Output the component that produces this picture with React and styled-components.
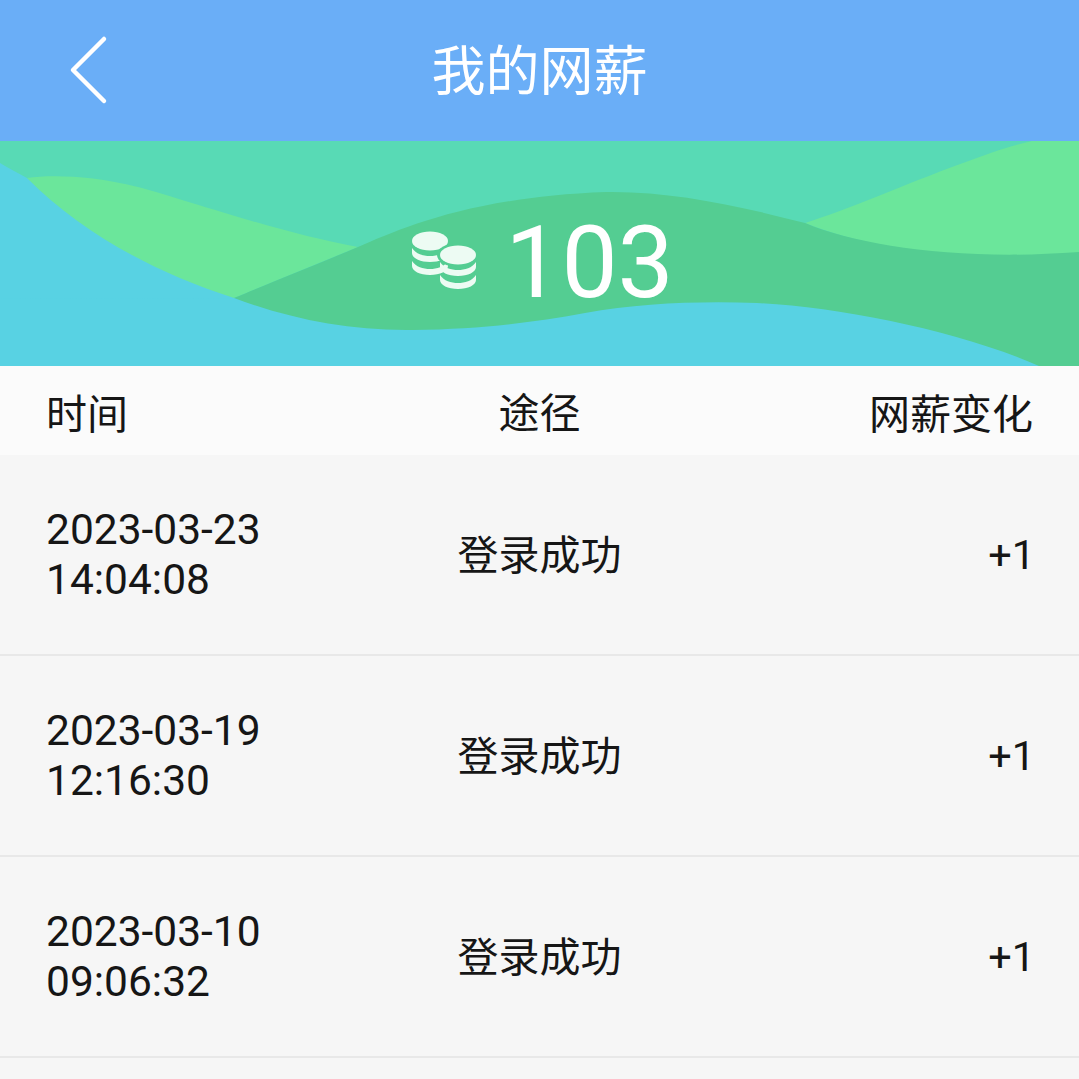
import React from 'react';
import styled, { createGlobalStyle } from 'styled-components';

const Global = createGlobalStyle`
  html, body { margin: 0; padding: 0; background: #f6f6f6; }
  body { font-family: Roboto, "Noto Sans CJK SC", sans-serif; overflow: hidden; }
`;

const Page = styled.div`
  width: 1079px;
  height: 1079px;
  overflow: hidden;
  background: #f6f6f6;
  color: #161616;
`;

const TopBar = styled.header`
  height: 141px;
  background: #6aaef7;
  display: flex;
  align-items: center;
  justify-content: center;
  position: relative;
`;

const BackIcon = styled.svg`
  position: absolute;
  left: 66px;
  top: 32px;
`;

const Title = styled.h1`
  margin: 4px 0 0;
  color: #fff;
  font-size: 54px;
  font-weight: 400;
  line-height: 1;
`;

const Banner = styled.section`
  height: 225px;
  position: relative;
  display: flex;
  align-items: center;
  justify-content: center;
  gap: 26px;
  padding-left: 6px;
  box-sizing: border-box;
  overflow: hidden;
  background: #58dab5;
`;

const Waves = styled.svg`
  position: absolute;
  inset: 0;
`;

const Coins = styled.svg`
  position: relative;
  margin-top: 16px;
`;

const Total = styled.span`
  position: relative;
  color: #fff;
  font-size: 100px;
  font-weight: 400;
  line-height: 1;
  margin-top: 18px;
`;

const Row = styled.div`
  display: grid;
  grid-template-columns: 1fr auto 1fr;
  align-items: center;
  padding: 0 46px;
  box-sizing: border-box;
  height: ${p => p.$head ? '89px' : '201px'};
  background: ${p => p.$head ? '#fbfbfb' : 'transparent'};
  border-bottom: ${p => p.$head ? 'none' : '2px solid #e8e8e8'};
  font-size: 41px;
`;

const When = styled.div`
  font-size: 42.5px;
  line-height: 50px;
`;

const Way = styled.div`
  text-align: center;
  margin-top: ${p => p.$head ? '-1px' : '-6px'};
`;

const Change = styled.div`
  text-align: right;
  font-size: ${p => p.$head ? '41px' : '41.5px'};
  margin-right: ${p => p.$head ? '0' : '-2px'};
`;

const rows = [
  ['2023-03-23', '14:04:08'],
  ['2023-03-19', '12:16:30'],
  ['2023-03-10', '09:06:32'],
];

const Coin = ({ x, y }) => (
  <g fill="#edfbf3">
    <ellipse cx={x} cy={y} rx="18" ry="9.5" />
    <path d={`M${x - 18} ${y + 7}c4 6 11 8 18 8s14-2 18-8v5c0 5-8 9-18 9s-18-4-18-9z`} />
    <path d={`M${x - 18} ${y + 20}c4 6 11 8 18 8s14-2 18-8v5c0 5-8 9-18 9s-18-4-18-9z`} />
  </g>
);

export default function App() {
  return (
    <Page>
      <Global />
      <TopBar>
        <BackIcon width="44" height="76" viewBox="0 0 44 76" fill="none">
          <path d="M38 7 L7 38 L38 69" stroke="#fff" strokeWidth="4.5" strokeLinecap="round" strokeLinejoin="round" />
        </BackIcon>
        <Title>我的网薪</Title>
      </TopBar>
      <Banner>
        <Waves width="1079" height="225" viewBox="0 0 1079 225">
          <path d="M0 22 C8 27 18 32 27 37 L234 157 L300 225 L0 225 Z" fill="#58d2e3" />
          <path d="M27 37 C50 34 90 34 138 46 C190 60 280 92 358 106 L234 157 C150 130 80 90 27 37 Z" fill="#6be69b" />
          <path d="M805 82 C850 68 900 45 963 22 C990 12 1010 5 1032 0 L1079 0 L1079 115 L984 115 C920 112 860 104 805 82 Z" fill="#6be69b" />
          <path d="M234 157 C270 142 320 122 358 106 C400 88 470 56 606 51 C670 50 735 64 805 82 C860 105 960 120 1079 111 L1079 225 L234 225 Z" fill="#54cd92" />
          <path d="M0 158 L234 157 C290 178 350 190 413 189 C480 188 530 182 585 172 C640 162 700 160 757 162 C840 166 960 190 1039 225 L0 225 Z" fill="#58d2e3" />
        </Waves>
        <Coins width="68" height="62" viewBox="0 0 68 62">
          <Coin x={19} y={10} />
          <ellipse cx="47" cy="24" rx="21" ry="12" fill="#54cd92" />
          <Coin x={47} y={24} />
        </Coins>
        <Total>103</Total>
      </Banner>
      <Row $head>
        <div>时间</div>
        <Way $head>途径</Way>
        <Change $head>网薪变化</Change>
      </Row>
      {rows.map(r => (
        <Row key={r[0]}>
          <When>{r[0]}<br />{r[1]}</When>
          <Way>登录成功</Way>
          <Change>+1</Change>
        </Row>
      ))}
    </Page>
  );
}
